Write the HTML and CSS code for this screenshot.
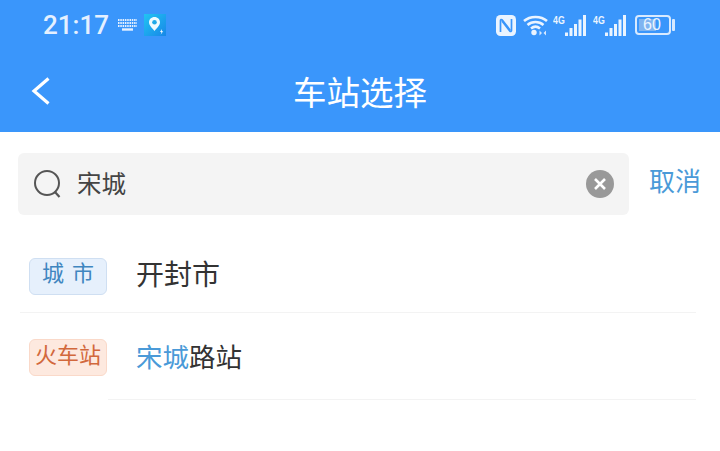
FILE: index.html
```html
<!DOCTYPE html>
<html lang="zh-CN">
<head>
    <meta charset="UTF-8">
    <meta name="viewport" content="width=device-width, initial-scale=1.0">
    <title>车站选择</title>
    <link rel="stylesheet" href="styles.css">
</head>
<body>

<div class="header">
    <!-- Status bar -->
    <div class="status-bar">
        <div class="status-left">
            <span class="clock">21:17</span>
            <svg class="keyboard" width="19" height="12" viewBox="0 0 19 12">
                <path d="M0 1h19M0 4h19M0 7h19" stroke="#e4f0ff" stroke-width="2" stroke-dasharray="1.500 .8" fill="none"/>
                <path d="M4 10.500h11" stroke="#e4f0ff" stroke-width="2.400" fill="none"/>
            </svg>
            <svg class="map-app" width="22" height="22" viewBox="0 0 22 22">
                <defs>
                    <linearGradient id="mapbg" x1="0" y1="0" x2="1" y2="1">
                        <stop offset="0" stop-color="#22c4f2"/>
                        <stop offset="1" stop-color="#1787e8"/>
                    </linearGradient>
                </defs>
                <rect width="22" height="22" fill="url(#mapbg)"/>
                <path d="M10.500 3c-3.200 0-5.500 2.400-5.500 5.300 0 3.400 3.600 6.200 5.500 8.700 1.900-2.500 5.500-5.300 5.500-8.700 0-2.900-2.300-5.300-5.500-5.300z" fill="#eefaff"/>
                <circle cx="10.500" cy="8.300" r="2.300" fill="#1fa9e8"/>
                <path d="M18 15l-2 3h1.500l-.8 2.500 2.500-3.200h-1.500z" fill="#fff"/>
            </svg>
        </div>
        <div class="status-right">
            <svg class="nfc" width="20" height="21" viewBox="0 0 20 21">
                <rect width="20" height="21" rx="4.500" fill="#eaf4ff"/>
                <path d="M4.500 17V5.500c0-1 1-1.300 1.600-.6L14 15M15.500 4v11.500c0 1-1 1.300-1.600.6L6 6" fill="none" stroke="#3a96fb" stroke-width="1.700"/>
            </svg>
            <svg class="wifi" width="25" height="22" viewBox="0 0 25 22">
                <path d="M1 7C7 1.500 18 1.500 24 7M4.500 11C9 7 16 7 20.500 11M8 14.500c2.800-2.300 6.200-2.300 9 0" fill="none" stroke="#eaf4ff" stroke-width="2.500"/>
                <circle cx="11" cy="18.500" r="2.700" fill="#eaf4ff"/>
                <path d="M19 19l-2.500-2.500v5zM20.500 19l2.500-2.500v5z" fill="#d5e8ff"/>
            </svg>
            <div class="signal">
                <span class="net">4G</span>
                <svg width="21" height="21" viewBox="0 0 21 21">
                    <rect x="0" y="17.500" width="3" height="3.500" fill="#eaf4ff"/>
                    <rect x="4.500" y="13" width="3" height="8" fill="#eaf4ff"/>
                    <rect x="9" y="9" width="3" height="12" fill="#eaf4ff"/>
                    <rect x="13.500" y="4.500" width="3" height="16.500" fill="#eaf4ff"/>
                    <rect x="18" y="0" width="3" height="21" fill="#eaf4ff"/>
                </svg>
            </div>
            <div class="signal signal-second">
                <span class="net">4G</span>
                <svg width="21" height="21" viewBox="0 0 21 21">
                    <rect x="0" y="17.500" width="3" height="3.500" fill="#eaf4ff"/>
                    <rect x="4.500" y="13" width="3" height="8" fill="#eaf4ff"/>
                    <rect x="9" y="9" width="3" height="12" fill="#eaf4ff"/>
                    <rect x="13.500" y="4.500" width="3" height="16.500" fill="#eaf4ff"/>
                    <rect x="18" y="0" width="3" height="21" fill="#eaf4ff"/>
                </svg>
            </div>
            <div class="battery">
                <div class="battery-body">
                    <span class="battery-level"></span>
                    <span class="battery-text">60</span>
                </div>
                <div class="battery-cap"></div>
            </div>
        </div>
    </div>

    <!-- Title bar -->
    <div class="title-bar">
        <svg class="back" width="20" height="28" viewBox="0 0 20 28">
            <path d="M17.500 1.500L3 14l14.500 12.500" fill="none" stroke="#fff" stroke-width="3.200"/>
        </svg>
        <h1>车站选择</h1>
    </div>
</div>

<!-- Search -->
<div class="search-row">
    <div class="search-box">
        <svg class="search-icon" width="30" height="30" viewBox="0 0 30 30">
            <circle cx="14" cy="14" r="12" fill="none" stroke="#555" stroke-width="2"/>
            <path d="M22 23l4.500 5" fill="none" stroke="#555" stroke-width="2.200"/>
        </svg>
        <span class="search-text">宋城</span>
        <svg class="clear" width="28" height="28" viewBox="0 0 28 28">
            <circle cx="14" cy="14" r="14" fill="#999"/>
            <path d="M9 9l10 10M19 9L9 19" stroke="#fff" stroke-width="2.600"/>
        </svg>
    </div>
    <a class="cancel">取消</a>
</div>

<!-- Results -->
<div class="result-list">
    <div class="result-item result-city">
        <span class="tag tag-city">城 市</span>
        <span class="name name-city">开封市</span>
    </div>
    <div class="result-item result-station">
        <span class="tag tag-station">火车站</span>
        <span class="name name-station"><em>宋城</em>路站</span>
    </div>
</div>

</body>
</html>
```

FILE: styles.css
```css
body {
    font-family: "Noto Sans CJK SC", "Noto Sans", sans-serif;
    margin: 0;
    padding: 0;
    background-color: #fff;
    color: #333;
    overflow: hidden;
}
.header {
    background-color: #3a96fb;
    height: 132px;
    color: #fff;
}
.status-bar {
    height: 50px;
    padding: 0 45px 0 43px;
    display: flex;
    justify-content: space-between;
    align-items: center;
}
.status-left {
    display: flex;
    align-items: center;
}
.clock {
    font-family: Roboto, sans-serif;
    font-size: 26px;
    font-weight: 500;
    color: #e4f0ff;
}
.keyboard {
    margin-left: 9px;
}
.map-app {
    margin-left: 7px;
}
.status-right {
    display: flex;
    align-items: center;
}
.wifi {
    margin-left: 7px;
}
.signal {
    display: flex;
    align-items: flex-end;
    height: 21px;
    margin-left: 5px;
}
.signal-second {
    margin-left: 7px;
}
.signal .net {
    font-family: "Liberation Sans", sans-serif;
    font-size: 11px;
    font-weight: bold;
    line-height: 11px;
    width: 12px;
    color: #eaf4ff;
    align-self: flex-start;
    white-space: nowrap;
    transform: scaleX(0.8);
    transform-origin: left top;
}
.battery {
    display: flex;
    align-items: center;
    margin-left: 9px;
}
.battery-body {
    width: 36px;
    height: 20px;
    border: 2px solid #d8eaff;
    border-radius: 4px;
    box-sizing: border-box;
    padding: 2px;
    position: relative;
}
.battery-level {
    display: block;
    width: 60%;
    height: 100%;
    background-color: #7fb4f0;
}
.battery-text {
    position: absolute;
    left: 6px;
    top: 0;
    font-family: "Liberation Sans", sans-serif;
    font-size: 16px;
    line-height: 16px;
    color: #eaf4ff;
}
.battery-cap {
    width: 3px;
    height: 12px;
    margin-left: 1px;
    background-color: #d8eaff;
    border-radius: 1px;
}
.title-bar {
    height: 82px;
    display: flex;
    align-items: center;
    justify-content: center;
    position: relative;
}
.title-bar h1 {
    margin: 0;
    font-size: 33.500px;
    font-weight: 400;
    margin-bottom: 2px;
}
.back {
    position: absolute;
    left: 31px;
    top: 27px;
}
.search-row {
    display: flex;
    align-items: flex-start;
    padding: 21px 19px 0 18px;
}
.search-box {
    flex: 1;
    height: 62px;
    background-color: #f4f4f4;
    border-radius: 6px;
    display: flex;
    align-items: center;
    padding: 0 15px;
}
.search-icon {
    flex: none;
}
.search-text {
    font-size: 24.500px;
    color: #444;
    margin-left: 14px;
    flex: 1;
    line-height: 34px;
    margin-bottom: 2px;
}
.cancel {
    font-size: 26px;
    line-height: 36px;
    color: #4a9ad8;
    margin: 9px 0 0 20px;
}
.result-list {
    padding-top: 10px;
}
.result-item {
    display: flex;
    align-items: flex-start;
    box-sizing: border-box;
    border-bottom: 1px solid #f3f3f3;
}
.result-city {
    height: 88px;
    margin: 0 24px 0 20px;
    padding: 33px 0 0 9px;
}
.result-station {
    height: 87px;
    margin: 0 24px 0 108px;
    padding-top: 26px;
}
.tag {
    width: 78px;
    height: 37px;
    box-sizing: border-box;
    border-radius: 6px;
    font-size: 22px;
    text-align: center;
    flex: none;
}
.tag-city {
    background-color: #e6f0fc;
    border: 1px solid #cfdff2;
    color: #3f86c0;
    line-height: 25px;
    word-spacing: 3px;
}
.tag-station {
    background-color: #fde9df;
    border: 1px solid #fad9c9;
    color: #d2683c;
    margin-left: -79px;
    line-height: 26px;
}
.name-city {
    font-size: 28px;
    margin-left: 29px;
    color: #333;
    line-height: 30px;
}
.name-station {
    font-size: 26.500px;
    margin-left: 29px;
    color: #333;
    line-height: 34px;
}
.name-station em {
    font-style: normal;
    color: #4a9ad8;
}
```
